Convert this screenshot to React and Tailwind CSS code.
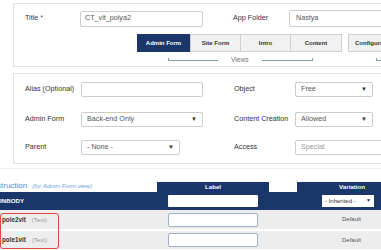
import React from "react";

const navy = "bg-[#1b376a]";

function Field({ value, width, arrow, muted }) {
  return (
    <div
      className={`${width} h-[15px] shrink-0 border border-[#cccccc] rounded-[2px] bg-white flex items-center pl-[5px] pr-[5px] text-[7.2px] ${
        muted ? "text-[#999]" : "text-[#555]"
      }`}
    >
      <span className="flex-1 whitespace-nowrap overflow-hidden">{value}</span>
      {arrow && <span className="text-[6px] text-[#333]">▼</span>}
    </div>
  );
}

function Tab({ label, active, width }) {
  return (
    <div
      className={`${width} h-[18px] shrink-0 flex items-center justify-center text-[6px] font-bold whitespace-nowrap ${
        active
          ? `${navy} text-white`
          : "bg-[#f1f1f1] border border-[#cfcfcf] text-[#333]"
      }`}
    >
      {label}
    </div>
  );
}

function Row({ name, top }) {
  return (
    <div className={`flex items-center bg-[#ededed] ${top ? "h-[19px]" : "h-[18px] mt-[2px]"}`}>
      <div className="w-[157px] shrink-0 pl-[2px] flex items-center whitespace-nowrap">
        <span className="text-[6.3px] font-bold text-[#333]">{name}</span>
        <span className="ml-[6px] text-[6.1px] text-[#999]">(Text)</span>
      </div>
      <div className="w-[112px] shrink-0 pl-[11px]">
        <div className="w-[90px] h-[14px] bg-white border-[1.5px] border-[#9fb0c8] rounded-[2px]" />
      </div>
      <div className="w-[28px] shrink-0" />
      <div className="flex-1 pl-[45px] text-[6px] text-[#555]">Default</div>
    </div>
  );
}

export default function App() {
  return (
    <div className="relative w-[381px] h-[250px] overflow-hidden bg-white font-['Liberation_Sans',Arial,sans-serif]">
      {/* top panel */}
      <div className="ml-[13px] mt-[3px] w-[420px] h-[64px] border border-[#e2e2e2] bg-white">
        <div className="flex items-center mt-[6px]">
          <div className="w-[66px] shrink-0 pl-[11px] text-[7.2px] text-[#333]">
            Title <span className="text-[#555]">*</span>
          </div>
          <div className="w-[123px] h-[16px] shrink-0 border border-[#cccccc] rounded-[2px] flex items-center pl-[4px] text-[7.2px] text-[#555]">
            CT_vit_polya2
          </div>
          <div className="ml-[30px] w-[56px] shrink-0 text-[7.2px] text-[#333]">App Folder</div>
          <div className="w-[110px] h-[17px] shrink-0 border border-[#cccccc] rounded-[2px] flex items-center pl-[6px] text-[7.2px] text-[#555]">
            Nastya
          </div>
        </div>

        <div className="flex mt-[7px] ml-[123px]">
          <Tab label="Admin Form" active width="w-[53px]" />
          <Tab label="Site Form" width="w-[51px]" />
          <Tab label="Intro" width="w-[51px] -ml-px" />
          <Tab label="Content" width="w-[52px] -ml-px" />
          <div className="ml-[6px] w-[60px] h-[18px] shrink-0 bg-[#f1f1f1] border border-[#cfcfcf] flex items-center pl-[6px] text-[6px] font-bold text-[#333] whitespace-nowrap">
            Configuration
          </div>
        </div>

        <div className="flex items-center mt-[3px] h-[10px]">
          <div className="ml-[154px] w-[50px] h-[3px] border-l border-b border-[#8a9ab0] self-start mt-[3px]" />
          <div className="ml-[13px] text-[6.7px] text-[#777] leading-none">Views</div>
          <div className="ml-[13px] w-[51px] h-[3px] border-r border-b border-[#8a9ab0] self-start mt-[3px]" />
          <div className="ml-[63px] w-[20px] h-[3px] border-l border-b border-[#8a9ab0] self-start mt-[3px]" />
        </div>
      </div>

      {/* settings panel */}
      <div className="ml-[13px] mt-[6px] w-[420px] h-[91px] border border-[#e2e2e2] bg-white">
        <div className="flex items-center mt-[8px]">
          <div className="w-[67px] shrink-0 pl-[11px] text-[7.2px] text-[#333]">Alias (Optional)</div>
          <Field value="" width="w-[122px]" />
          <div className="ml-[31px] w-[61px] shrink-0 text-[7.2px] text-[#333]">Object</div>
          <Field value="Free" width="w-[78px]" arrow />
        </div>
        <div className="flex items-center mt-[15px]">
          <div className="w-[67px] shrink-0 pl-[11px] text-[7.2px] text-[#333]">Admin Form</div>
          <Field value="Back-end Only" width="w-[122px]" arrow />
          <div className="ml-[31px] w-[61px] shrink-0 text-[7.2px] text-[#333] whitespace-nowrap">
            Content Creation
          </div>
          <Field value="Allowed" width="w-[78px]" arrow />
        </div>
        <div className="flex items-center mt-[13px]">
          <div className="w-[67px] shrink-0 pl-[11px] text-[7.2px] text-[#333]">Parent</div>
          <Field value="- None -" width="w-[99px]" arrow />
          <div className="ml-[54px] w-[61px] shrink-0 text-[7.2px] text-[#333]">Access</div>
          <Field value="Special" width="w-[100px]" muted />
        </div>
      </div>

      <div className="mt-[4px] h-px bg-[#efefef]" />

      {/* table header */}
      <div className="flex items-end h-[23px]">
        <div className="w-[157px] shrink-0 self-start pt-[9px] leading-[10px] whitespace-nowrap overflow-hidden">
          <span className="inline-block -ml-[3px] text-[8px] text-[#4a8fdb]">struction</span>
          <span className="ml-[5px] text-[6.1px] italic text-[#6b9fdc]">(for Admin Form view)</span>
        </div>
        <div className={`w-[112px] shrink-0 h-[10px] ${navy} text-white text-[6.2px] font-bold leading-[10px] text-center`}>
          Label
        </div>
        <div className="w-[28px] shrink-0 h-[10px] bg-white" />
        <div className={`flex-1 h-[10px] ${navy} text-white text-[6.2px] font-bold leading-[10px] pl-[42px]`}>
          Variation
        </div>
      </div>

      <div className={`flex items-center h-[18px] ${navy}`}>
        <div className="w-[157px] shrink-0 text-[6.2px] font-bold text-white">INBODY</div>
        <div className="w-[112px] shrink-0 pl-[11px]">
          <div className="w-[90px] h-[12px] bg-white rounded-[1px]" />
        </div>
        <div className="w-[28px] shrink-0" />
        <div className="flex-1 pl-[25px]">
          <div className="w-[52px] h-[12px] bg-white flex items-center pl-[3px] pr-[3px] text-[6px] text-[#333]">
            <span className="flex-1 whitespace-nowrap">- Inherited -</span>
            <span className="text-[5px]">▼</span>
          </div>
        </div>
      </div>

      <Row name="pole2vit" top />
      <Row name="pole1vit" />

      <div className="absolute left-0 top-[213px] w-[59px] h-[36px] border-[1.5px] border-[#e0463f] rounded-[3px]" />
    </div>
  );
}
